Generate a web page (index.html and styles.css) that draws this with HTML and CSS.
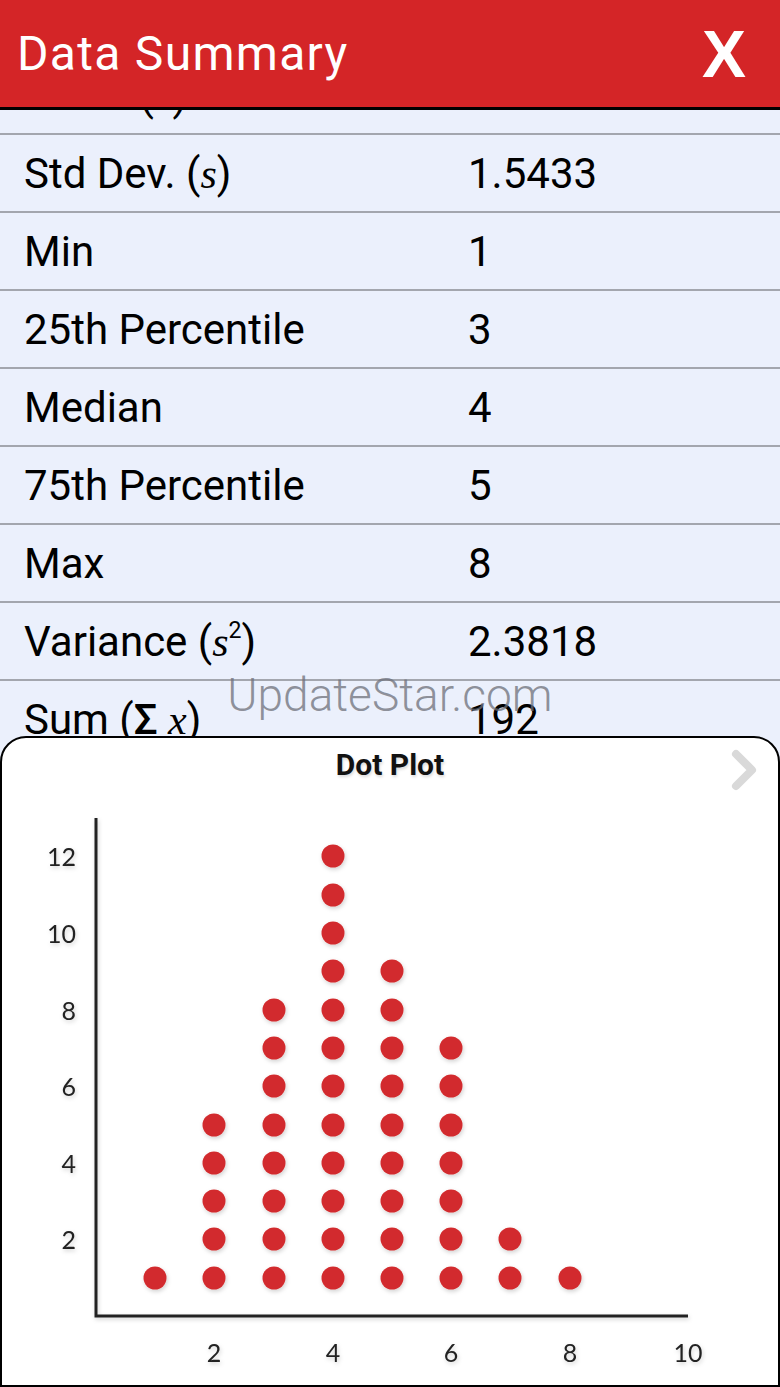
FILE: index.html
```html
<!DOCTYPE html>
<html lang="en">
<head>
    <meta charset="UTF-8">
    <meta name="viewport" content="width=device-width, initial-scale=1.0">
    <title>Data Summary</title>
    <link rel="stylesheet" href="styles.css">
</head>
<body>
    <header class="top-bar">
        <h1 class="top-title">Data Summary</h1>
        <span class="close-btn">X</span>
    </header>

    <div class="stats">
        <div class="stats-inner">
            <div class="stat-row"><span class="stat-label">Mean (<i class="math">x̄</i>)</span><span class="stat-value">4.2667</span></div>
            <div class="stat-row"><span class="stat-label">Std Dev. (<i class="math">s</i>)</span><span class="stat-value">1.5433</span></div>
            <div class="stat-row"><span class="stat-label">Min</span><span class="stat-value">1</span></div>
            <div class="stat-row"><span class="stat-label">25th Percentile</span><span class="stat-value">3</span></div>
            <div class="stat-row"><span class="stat-label">Median</span><span class="stat-value">4</span></div>
            <div class="stat-row"><span class="stat-label">75th Percentile</span><span class="stat-value">5</span></div>
            <div class="stat-row"><span class="stat-label">Max</span><span class="stat-value">8</span></div>
            <div class="stat-row"><span class="stat-label">Variance (<i class="math">s</i><sup>2</sup>)</span><span class="stat-value">2.3818</span></div>
            <div class="stat-row"><span class="stat-label">Sum (<span class="sigma">Σ</span> <i class="math">x</i>)</span><span class="stat-value">192</span></div>
        </div>
    </div>

    <div class="watermark">UpdateStar.com</div>

    <section class="plot-card">
        <h2 class="plot-title">Dot Plot</h2>
        <svg class="chevron" width="30" height="44" viewBox="0 0 30 44">
            <path d="M6 6 L22 22 L6 38" fill="none" stroke="#d9d9d9" stroke-width="8" stroke-linecap="round" stroke-linejoin="round"/>
        </svg>

        <svg class="plot" width="776" height="591" viewBox="0 0 776 591">
            <defs>
                <filter id="soft" x="-50%" y="-50%" width="200%" height="200%">
                    <feDropShadow dx="1" dy="2" stdDeviation="2" flood-color="#000" flood-opacity="0.18"/>
                </filter>
            </defs>

            <g class="axis" filter="url(#soft)">
                <path d="M94 24 V522 H686"/>
            </g>

            <g class="tick-labels" filter="url(#soft)">
                <text x="74" y="445" text-anchor="end">2</text>
                <text x="74" y="369" text-anchor="end">4</text>
                <text x="74" y="292" text-anchor="end">6</text>
                <text x="74" y="216" text-anchor="end">8</text>
                <text x="74" y="139" text-anchor="end">10</text>
                <text x="74" y="62" text-anchor="end">12</text>

                <text x="212" y="558" text-anchor="middle">2</text>
                <text x="331" y="558" text-anchor="middle">4</text>
                <text x="449" y="558" text-anchor="middle">6</text>
                <text x="568" y="558" text-anchor="middle">8</text>
                <text x="686" y="558" text-anchor="middle">10</text>
            </g>

            <g class="dots" filter="url(#soft)">
                <!-- 1 -->
                <circle cx="153" cy="484" r="11.5"/>
                <!-- 2 -->
                <circle cx="212" cy="484" r="11.5"/>
                <circle cx="212" cy="445" r="11.5"/>
                <circle cx="212" cy="407" r="11.5"/>
                <circle cx="212" cy="369" r="11.5"/>
                <circle cx="212" cy="331" r="11.5"/>
                <!-- 3 -->
                <circle cx="272" cy="484" r="11.5"/>
                <circle cx="272" cy="445" r="11.5"/>
                <circle cx="272" cy="407" r="11.5"/>
                <circle cx="272" cy="369" r="11.5"/>
                <circle cx="272" cy="331" r="11.5"/>
                <circle cx="272" cy="292" r="11.5"/>
                <circle cx="272" cy="254" r="11.5"/>
                <circle cx="272" cy="216" r="11.5"/>
                <!-- 4 -->
                <circle cx="331" cy="484" r="11.5"/>
                <circle cx="331" cy="445" r="11.5"/>
                <circle cx="331" cy="407" r="11.5"/>
                <circle cx="331" cy="369" r="11.5"/>
                <circle cx="331" cy="331" r="11.5"/>
                <circle cx="331" cy="292" r="11.5"/>
                <circle cx="331" cy="254" r="11.5"/>
                <circle cx="331" cy="216" r="11.5"/>
                <circle cx="331" cy="177" r="11.5"/>
                <circle cx="331" cy="139" r="11.5"/>
                <circle cx="331" cy="101" r="11.5"/>
                <circle cx="331" cy="62" r="11.5"/>
                <!-- 5 -->
                <circle cx="390" cy="484" r="11.5"/>
                <circle cx="390" cy="445" r="11.5"/>
                <circle cx="390" cy="407" r="11.5"/>
                <circle cx="390" cy="369" r="11.5"/>
                <circle cx="390" cy="331" r="11.5"/>
                <circle cx="390" cy="292" r="11.5"/>
                <circle cx="390" cy="254" r="11.5"/>
                <circle cx="390" cy="216" r="11.5"/>
                <circle cx="390" cy="177" r="11.5"/>
                <!-- 6 -->
                <circle cx="449" cy="484" r="11.5"/>
                <circle cx="449" cy="445" r="11.5"/>
                <circle cx="449" cy="407" r="11.5"/>
                <circle cx="449" cy="369" r="11.5"/>
                <circle cx="449" cy="331" r="11.5"/>
                <circle cx="449" cy="292" r="11.5"/>
                <circle cx="449" cy="254" r="11.5"/>
                <!-- 7 -->
                <circle cx="508" cy="484" r="11.5"/>
                <circle cx="508" cy="445" r="11.5"/>
                <!-- 8 -->
                <circle cx="568" cy="484" r="11.5"/>
            </g>
        </svg>
    </section>
</body>
</html>
```

FILE: styles.css
```css
body {
    margin: 0;
    width: 780px;
    height: 1387px;
    overflow: hidden;
    position: relative;
    font-family: Roboto, "Liberation Sans", sans-serif;
    background-color: #ebf0fc;
    color: #000;
}

.top-bar {
    height: 107px;
    display: flex;
    align-items: center;
    justify-content: space-between;
    padding: 0 34px 0 17px;
    background-color: #d42527;
    border-bottom: 3px solid #000;
    position: relative;
    z-index: 2;
}

.top-title {
    margin: 0;
    font-size: 48px;
    font-weight: 400;
    color: #fff;
    letter-spacing: 1.3px;
}

.close-btn {
    font-family: "Liberation Sans", Arial, sans-serif;
    font-size: 66px;
    font-weight: 700;
    color: #fff;
    line-height: 1;
}

/* the list is scrolled: first row sits partly under the header */
.stats {
    height: 626px;
    overflow: hidden;
}

.stats-inner {
    margin-top: -53px;
}

.stat-row {
    height: 76px;
    display: flex;
    align-items: center;
    border-bottom: 2px solid #a3a6ae;
    font-size: 42px;
}

.stat-label {
    width: 468px;
    padding-left: 24px;
    box-sizing: border-box;
}

.stat-value {
    font-size: 42px;
}

.math {
    font-family: "Liberation Serif", "DejaVu Serif", serif;
    font-style: italic;
}

.sigma {
    font-weight: 500;
}

sup {
    font-size: 0.55em;
    vertical-align: 0.8em;
    line-height: 0;
}

.watermark {
    position: absolute;
    top: 668px;
    left: 0;
    right: 0;
    text-align: center;
    font-size: 46px;
    font-weight: 300;
    color: rgba(110, 112, 122, 0.75);
    z-index: 3;
    pointer-events: none;
}

.plot-card {
    position: relative;
    height: 651px;
    box-sizing: border-box;
    background-color: #fff;
    border: 2px solid #000;
    border-radius: 26px 26px 0 0;
}

.plot-title {
    margin: 0;
    height: 56px;
    padding-top: 9px;
    box-sizing: border-box;
    text-align: center;
    font-size: 30px;
    font-weight: 700;
    color: #111;
    text-shadow: 1px 2px 3px rgba(0, 0, 0, 0.15);
}

.chevron {
    position: absolute;
    top: 10px;
    right: 18px;
}

.plot {
    display: block;
}

.axis path {
    fill: none;
    stroke: #222;
    stroke-width: 3;
}

.tick-labels text {
    font-family: Lato, "Open Sans", sans-serif;
    font-size: 25px;
    fill: #222;
    dominant-baseline: central;
}

.dots circle {
    fill: #d22b2d;
}
```
